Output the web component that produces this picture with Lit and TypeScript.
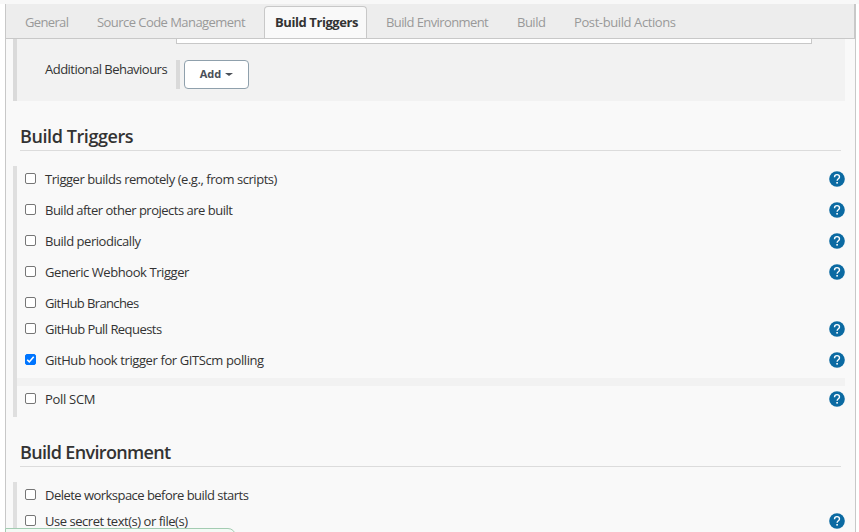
import { LitElement, html, css, svg, nothing } from "lit";
import { customElement, property } from "lit/decorators.js";

interface Option {
  label: string;
  spacing: number;
  help?: boolean;
  checked?: boolean;
  strip?: boolean;
}

const TABS = [
  { label: "General", width: 43, spacing: -0.65 },
  { label: "Source Code Management", width: 149, spacing: -0.55 },
  { label: "Build Triggers", width: 81, spacing: -0.42, active: true },
  { label: "Build Environment", width: 102, spacing: -0.6 },
  { label: "Build", width: 28, spacing: -0.5 },
  { label: "Post-build Actions", width: 102, spacing: -0.4 },
];

const TRIGGERS: Option[] = [
  { label: "Trigger builds remotely (e.g., from scripts)", spacing: -0.45, help: true },
  { label: "Build after other projects are built", spacing: -0.5, help: true },
  { label: "Build periodically", spacing: -0.45, help: true },
  { label: "Generic Webhook Trigger", spacing: -0.43, help: true },
  { label: "GitHub Branches", spacing: -0.62 },
  { label: "GitHub Pull Requests", spacing: -0.55, help: true },
  { label: "GitHub hook trigger for GITScm polling", spacing: -0.4, help: true, checked: true, strip: true },
  { label: "Poll SCM", spacing: -0.3, help: true },
];

const ENVIRONMENT: Option[] = [
  { label: "Delete workspace before build starts", spacing: -0.53 },
  { label: "Use secret text(s) or file(s)", spacing: -0.46, help: true },
];

@customElement("option-row")
export class OptionRow extends LitElement {
  @property({ attribute: false }) option!: Option;

  static styles = css`
    :host { display: flow-root; }
    .row { display: flex; align-items: center; height: 26px; padding-left: 8px; }
    .row.spaced { margin-bottom: 5px; }
    .box { box-sizing: border-box; width: 11px; height: 11px; margin: 0 9px 1px 0; border: 1px solid #767676; border-radius: 2px; background: #fff; flex: none; }
    .box.on { border-color: #0075ff; background: #0075ff; }
    .box svg { display: block; width: 9px; height: 9px; }
    .label { white-space: nowrap; line-height: 18px; padding-bottom: 1px; }
    .help { width: 16px; height: 16px; margin-left: auto; flex: none; }
    .strip { height: 8px; background: #f2f2f2; }
  `;

  render() {
    const o = this.option;
    return html`
      <div class="row ${o.help ? "spaced" : ""}">
        <span class="box ${o.checked ? "on" : ""}">
          ${o.checked ? html`<svg viewBox="0 0 9 9"><path d="M1.2 4.8 3.3 6.9 7.7 1.7" fill="none" stroke="#fff" stroke-width="1.6" /></svg>` : nothing}
        </span>
        <span class="label" style="letter-spacing:${o.spacing}px">${o.label}</span>
        ${o.help
          ? html`<svg class="help" viewBox="0 0 16 16">
              ${svg`<circle cx="8" cy="8" r="7.8" fill="#0b6aa2" />
              <path d="M5.5 6.2C5.5 4.5 6.5 3.6 8 3.6s2.5.9 2.5 2.3c0 1.7-2.4 1.9-2.4 3.8" fill="none" stroke="#fff" stroke-width="1.35" />
              <rect x="7.3" y="11" width="1.6" height="1.6" fill="#fff" />`}
            </svg>`
          : nothing}
      </div>
      ${o.strip ? html`<div class="strip"></div>` : nothing}
    `;
  }
}

@customElement("app-root")
export class AppRoot extends LitElement {
  static styles = css`
    :host { display: block; position: relative; box-sizing: border-box; width: 859px; height: 532px; padding: 0 3px 0 5px; overflow: hidden; background: #fff; border-top: 4px solid #f8f8f8; color: #333; font: 13px/18px "Open Sans", "Noto Sans", sans-serif; }
    .panel { box-sizing: border-box; width: 851px; height: 528px; background: #f9f9f9; border: solid #c8c8c8; border-width: 0 1px; }
    .tabs { display: flex; box-sizing: border-box; height: 35px; padding: 2px 0 0 8px; background: #ededed; border-bottom: 1px solid #c8c8c8; border-right: 1px solid #c8c8c8; }
    .tab { box-sizing: content-box; padding: 6px 10px 0; margin-right: 7px; height: 25px; border: 1px solid transparent; border-bottom: 0; color: #999; white-space: nowrap; }
    .tab.active { margin-right: 8px; background: #f9f9f9; border-color: #c8c8c8; border-radius: 4px 4px 0 0; color: #333; font-weight: 700; }
    .scm { display: flex; box-sizing: border-box; height: 62px; margin: 0 10px 0 7px; padding-left: 28px; background: #f2f2f2; border-left: 4px solid #dadada; }
    .scm-label { width: 131px; padding-top: 21px; white-space: nowrap; letter-spacing: -0.52px; flex: none; }
    .scm-body { width: 636px; }
    .field { box-sizing: border-box; height: 5px; background: #fff; border: 1px solid #c8c8c8; border-top: 0; }
    .adder { box-sizing: border-box; display: flex; width: 73px; height: 29px; margin-top: 16px; border-left: 4px solid #dadada; padding-left: 4px; }
    .add { box-sizing: border-box; width: 65px; height: 29px; padding: 0 0 1px 0; background: #fff; border: 1px solid #8fa0ac; border-radius: 4px; display: flex; align-items: center; justify-content: center; gap: 4px; font: 700 11px/16px "Open Sans", sans-serif; color: #4a4f57; }
    .caret { width: 0; height: 0; border: 4px solid transparent; border-top: 3.5px solid #4a4f57; border-bottom: 0; margin-top: 1px; }
    h2 { box-sizing: border-box; height: 26px; margin: 24px 14px 0; font: 600 18px/22px "Open Sans", "Noto Sans", sans-serif; border-bottom: 1px solid #dcdcdc; white-space: nowrap; }
    .options { display: flow-root; margin: 15px 10px 0 7px; border-left: 4px solid #dfdfdf; }
    .status { position: absolute; left: 5px; top: 524px; width: 231px; height: 20px; box-sizing: border-box; border: 1px solid #a3ccb2; border-radius: 0 8px 0 0; background: #f3faf5; }
  `;

  section(title: string, spacing: number, options: Option[]) {
    return html`
      <h2 style="letter-spacing:${spacing}px">${title}</h2>
      <div class="options">${options.map((o) => html`<option-row .option=${o}></option-row>`)}</div>
    `;
  }

  render() {
    return html`
      <div class="panel">
        <nav class="tabs">
          ${TABS.map((t) => html`<div class="tab ${t.active ? "active" : ""}" style="width:${t.width}px;letter-spacing:${t.spacing}px">${t.label}</div>`)}
        </nav>
        <div class="scm">
          <div class="scm-label">Additional Behaviours</div>
          <div class="scm-body">
            <div class="field"></div>
            <div class="adder"><button class="add">Add<span class="caret"></span></button></div>
          </div>
        </div>
        ${this.section("Build Triggers", -0.42, TRIGGERS)}
        ${this.section("Build Environment", -0.65, ENVIRONMENT)}
      </div>
      <div class="status"></div>
    `;
  }
}
